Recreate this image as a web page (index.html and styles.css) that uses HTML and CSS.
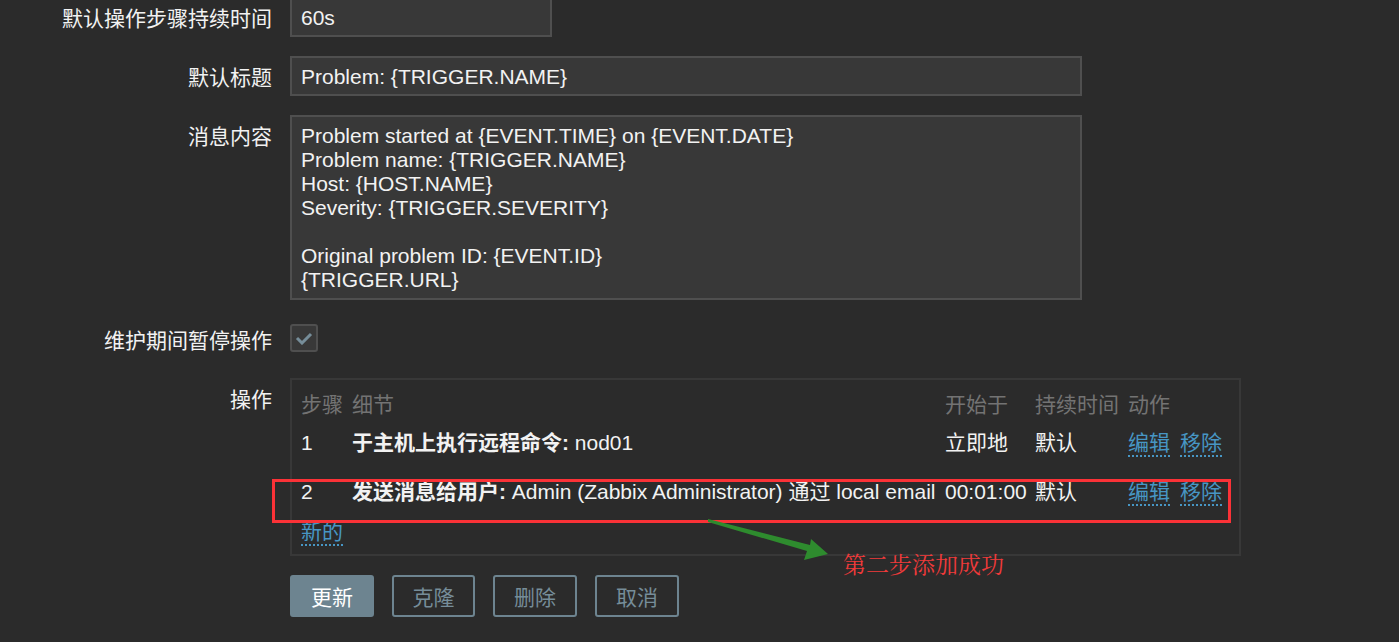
FILE: index.html
```html
<!DOCTYPE html>
<html lang="zh">
<head>
<meta charset="utf-8">
<title>动作</title>
<link rel="stylesheet" href="styles.css">
</head>
<body>
<main class="form">
  <div class="lbl">默认操作步骤持续时间</div>
  <div class="field"><div class="input w-short">60s</div></div>

  <div class="lbl">默认标题</div>
  <div class="field"><div class="input w-long">Problem: {TRIGGER.NAME}</div></div>

  <div class="lbl">消息内容</div>
  <div class="field"><div class="textarea w-long">Problem started at {EVENT.TIME} on {EVENT.DATE}
Problem name: {TRIGGER.NAME}
Host: {HOST.NAME}
Severity: {TRIGGER.SEVERITY}

Original problem ID: {EVENT.ID}
{TRIGGER.URL}</div></div>

  <div class="lbl">维护期间暂停操作</div>
  <div class="field check-field">
    <span class="checkbox"><svg width="20" height="14" viewBox="0 0 20 14"><path d="M3 7 L8 12 L17 3" fill="none" stroke="#768d99" stroke-width="3"/></svg></span>
  </div>

  <div class="lbl">操作</div>
  <div class="field">
    <div class="ops">
      <div class="ops-row head">
        <span>步骤</span><span>细节</span><span>开始于</span><span>持续时间</span><span>动作</span>
      </div>
      <div class="ops-row r1">
        <span>1</span><span><b>于主机上执行远程命令:</b> nod01</span><span>立即地</span><span>默认</span>
        <span class="acts"><a class="link">编辑</a><a class="link">移除</a></span>
      </div>
      <div class="ops-row r2">
        <span>2</span><span><b>发送消息给用户:</b> Admin (Zabbix Administrator) 通过 local email</span><span>00:01:00</span><span>默认</span>
        <span class="acts"><a class="link">编辑</a><a class="link">移除</a></span>
      </div>
      <div class="new-row"><a class="link">新的</a></div>
    </div>
  </div>

  <div class="lbl"></div>
  <div class="field buttons">
    <button class="btn primary">更新</button>
    <button class="btn narrow">克隆</button>
    <button class="btn">删除</button>
    <button class="btn">取消</button>
  </div>
</main>

<div class="mark-box"></div>
<svg class="mark-arrow" width="140" height="50" viewBox="700 515 140 50">
  <polygon points="708,519 810,545 811,539 828,554 804,560 807,551 708,522" fill="#2e8b2e"/>
</svg>
<div class="mark-text">第二步添加成功</div>
</body>
</html>
```

FILE: styles.css
```css
html, body {
  margin: 0;
  padding: 0;
  background: #2b2b2b;
  height: 100%;
  overflow: hidden;
}
body {
  position: relative;
  font-family: "Liberation Sans", "Noto Sans CJK SC", sans-serif;
  font-size: 21px;
  line-height: 24px;
  color: #f2f2f2;
}
.form {
  display: grid;
  grid-template-columns: 272px 1fr;
  column-gap: 18px;
  row-gap: 19px;
  margin-top: -3px;
}
.lbl {
  text-align: right;
  padding-top: 10px;
  line-height: 24px;
  white-space: nowrap;
}
.field {
  display: flex;
  min-height: 0;
}
.input, .textarea {
  box-sizing: border-box;
  background: #383838;
  border: 2px solid #4f4f4f;
  padding: 7px 9px 5px 9px;
  line-height: 24px;
  color: #f2f2f2;
}
.input { height: 40px; }
.w-short { width: 262px; }
.w-long { width: 792px; }
.textarea {
  height: 185px;
  white-space: pre;
}
.check-field {
  height: 40px;
  align-items: flex-start;
}
.checkbox {
  box-sizing: border-box;
  margin-top: 5px;
  width: 28px;
  height: 28px;
  border: 2px solid #4f4f4f;
  border-radius: 3px;
  background: #383838;
  display: flex;
  align-items: center;
  justify-content: center;
}
.ops {
  box-sizing: border-box;
  width: 951px;
  height: 178px;
  border: 2px solid #383838;
  padding: 13px 9px 0 9px;
}
.ops-row {
  display: grid;
  grid-template-columns: 51px 593px 90px 93px auto;
  white-space: nowrap;
}
.ops-row.head { color: #737373; }
.ops-row.r1 { margin-top: 14px; }
.ops-row.r2 { margin-top: 23px; }
.acts {
  display: flex;
  gap: 10px;
}
.link {
  color: #4796c4;
  border-bottom: 2px dotted #4796c4;
  cursor: pointer;
}
.new-row {
  margin-top: 14px;
  display: flex;
}
.buttons {
  gap: 18px;
}
.btn {
  box-sizing: border-box;
  width: 84px;
  height: 42px;
  border: 2px solid #6d8490;
  border-radius: 3px;
  background: transparent;
  color: #768d99;
  font-family: "Liberation Sans", "Noto Sans CJK SC", sans-serif;
  font-size: 21px;
  padding: 0;
}
.btn.narrow { width: 83px; }
.btn.primary {
  background: #6d8490;
  color: #ffffff;
}
.mark-box {
  position: absolute;
  left: 272px;
  top: 479px;
  width: 959px;
  height: 44px;
  box-sizing: border-box;
  border: 3px solid #fb3237;
}
.mark-arrow {
  position: absolute;
  left: 700px;
  top: 515px;
}
.mark-text {
  position: absolute;
  left: 843px;
  top: 550px;
  font-family: "Noto Serif CJK SC", serif;
  font-size: 23px;
  line-height: 28px;
  color: #f03a3a;
}
```
